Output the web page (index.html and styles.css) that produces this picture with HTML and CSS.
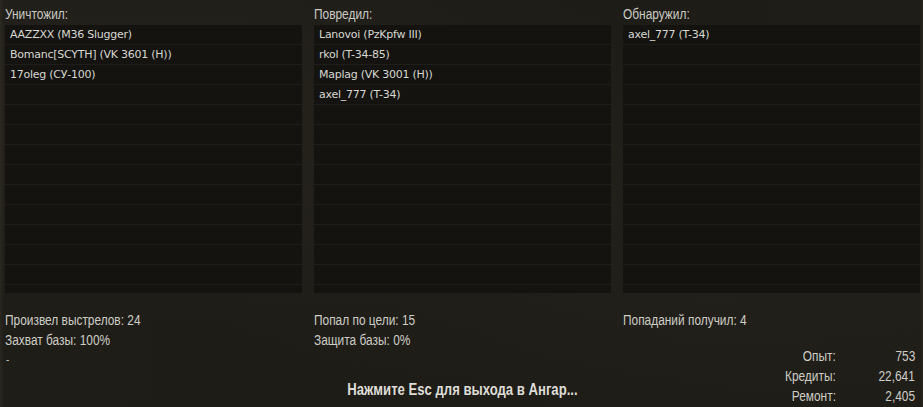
FILE: index.html
```html
<!DOCTYPE html>
<html lang="ru">
<head>
<meta charset="utf-8">
<title>Итоги боя</title>
<link rel="stylesheet" href="styles.css">
</head>
<body>
<div class="screen">
  <div class="lists">
    <section class="col">
      <div class="col-title"><span class="nt">Уничтожил:</span></div>
      <ul class="list">
        <li>AAZZXX (M36 Slugger)</li>
        <li>Bomanc[SCYTH] (VK 3601 (H))</li>
        <li>17oleg (СУ-100)</li>
        <li></li><li></li><li></li><li></li><li></li><li></li><li></li><li></li><li></li><li></li><li></li>
      </ul>
    </section>
    <section class="col">
      <div class="col-title"><span class="nt">Повредил:</span></div>
      <ul class="list">
        <li>Lanovoi (PzKpfw III)</li>
        <li>rkol (T-34-85)</li>
        <li>Maplag (VK 3001 (H))</li>
        <li>axel_777 (T-34)</li>
        <li></li><li></li><li></li><li></li><li></li><li></li><li></li><li></li><li></li><li></li>
      </ul>
    </section>
    <section class="col">
      <div class="col-title"><span class="nt">Обнаружил:</span></div>
      <ul class="list">
        <li>axel_777 (T-34)</li>
        <li></li><li></li><li></li><li></li><li></li><li></li><li></li><li></li><li></li><li></li><li></li><li></li><li></li>
      </ul>
    </section>
  </div>
  <div class="stats">
    <div class="stat-col">
      <div class="line"><span class="nt">Произвел выстрелов: 24</span></div>
      <div class="line"><span class="nt">Захват базы: 100%</span></div>
      <div class="line dash">-</div>
    </div>
    <div class="stat-col">
      <div class="line"><span class="nt">Попал по цели: 15</span></div>
      <div class="line"><span class="nt">Защита базы: 0%</span></div>
      <div class="exit"><span class="nt nt-center">Нажмите Esc для выхода в Ангар...</span></div>
    </div>
    <div class="stat-col">
      <div class="line"><span class="nt">Попаданий получил: 4</span></div>
      <div class="rewards">
        <span class="nt nt-right">Опыт:</span><span class="nt nt-right">753</span>
        <span class="nt nt-right">Кредиты:</span><span class="nt nt-right">22,641</span>
        <span class="nt nt-right">Ремонт:</span><span class="nt nt-right">2,405</span>
      </div>
    </div>
  </div>
</div>
</body>
</html>
```

FILE: styles.css
```css
html, body {
  margin: 0;
  padding: 0;
}

body {
  width: 923px;
  height: 407px;
  overflow: hidden;
  background: #1c1a16;
}

.screen {
  width: 923px;
  height: 407px;
  box-sizing: border-box;
  padding: 0 2px 0 5px;
  background:
    radial-gradient(ellipse at 20% 30%, rgba(60, 55, 44, 0.22), transparent 50%),
    radial-gradient(ellipse at 75% 60%, rgba(50, 46, 38, 0.22), transparent 55%),
    linear-gradient(90deg, #2a2720 0, #1f1d18 4px, #1e1c17 50%, #1f1d18 calc(100% - 3px), #2a2720 100%);
  color: #cecdc6;
  font-family: "Liberation Sans", Arial, sans-serif;
  font-size: 14px;
}

/* narrow face emulation (reference uses a condensed sans) */
.nt {
  display: inline-block;
  white-space: nowrap;
  transform: scaleX(0.85);
  transform-origin: left center;
}

.nt-center {
  transform-origin: center center;
}

.nt-right {
  transform-origin: right center;
}

.lists {
  display: grid;
  grid-template-columns: 297px 297px 297px;
  column-gap: 12px;
}

.col-title {
  height: 25px;
  line-height: 28px;
  color: #cbcac4;
}

.list {
  list-style: none;
  margin: 0;
  padding: 0;
  height: 268px;
  overflow: hidden;
  background: #141310;
  font-family: "DejaVu Sans", sans-serif;
  font-size: 11px;
  letter-spacing: -0.25px;
  color: #d8d7d1;
}

.list li {
  height: 19px;
  line-height: 19px;
  padding-left: 5px;
  border-bottom: 1px solid #201e1a;
  white-space: nowrap;
}

.stats {
  display: grid;
  grid-template-columns: 297px 297px 297px;
  column-gap: 12px;
  margin-top: 17px;
}

.stat-col {
  display: flex;
  flex-direction: column;
}

.line {
  height: 20px;
  line-height: 20px;
  white-space: nowrap;
}

.dash {
  padding-left: 1px;
  font-size: 10px;
}

.exit {
  margin-top: 30px;
  text-align: center;
  font-weight: bold;
  font-size: 16px;
  line-height: 20px;
  color: #dedcd6;
}

.exit .nt {
  transform: scaleX(0.82);
}

.rewards {
  margin-top: 16px;
  align-self: flex-end;
  margin-right: 5px;
  display: grid;
  grid-template-columns: auto 79px;
  justify-items: end;
  line-height: 20px;
}
```
